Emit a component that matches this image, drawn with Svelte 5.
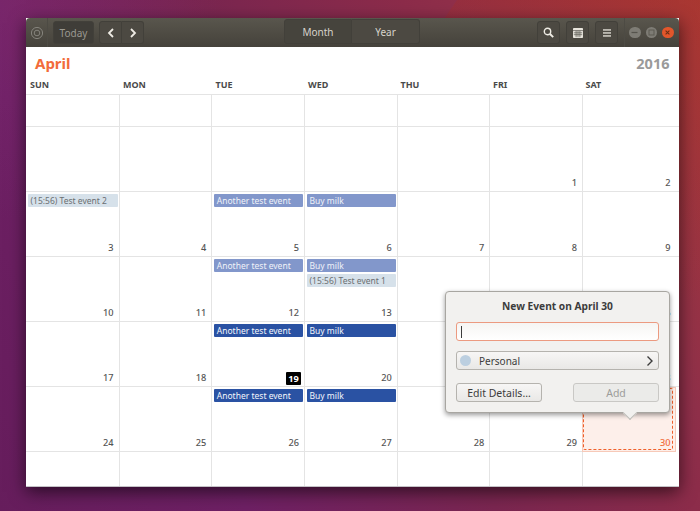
<script>
  const days = ["SUN", "MON", "TUE", "WED", "THU", "FRI", "SAT"];

  const another = { text: "Another test event", kind: "mid" };
  const milk = { text: "Buy milk", kind: "mid" };
  const anotherDark = { text: "Another test event", kind: "dark" };
  const milkDark = { text: "Buy milk", kind: "dark" };

  const events = {
    3: [{ text: "(15:56) Test event 2", kind: "light" }],
    5: [another],
    6: [milk],
    12: [another],
    13: [milk, { text: "(15:56) Test event 1", kind: "light" }],
    19: [anotherDark],
    20: [milkDark],
    26: [anotherDark],
    27: [milkDark]
  };

  // leading blanks for the first row, then 1..30, then blanks for the last
  const cells = [];
  for (let i = 0; i < 7; i++) cells.push({ day: null });
  for (let i = 0; i < 5; i++) cells.push({ day: null });
  for (let d = 1; d <= 30; d++) cells.push({ day: d, events: events[d] || [] });
  for (let i = 0; i < 7; i++) cells.push({ day: null });
</script>

<div class="desktop">
  <div class="band"></div>
  <div class="window">
    <header class="titlebar">
      <div class="group">
        <span class="app-icon">
          <svg width="14" height="14" viewBox="0 0 14 14" fill="none" stroke="#85837c">
            <circle cx="7" cy="7" r="5.6" />
            <circle cx="7" cy="7" r="2.8" />
          </svg>
        </span>
        <span class="sep"></span>
        <button class="btn today">Today</button>
        <div class="linked nav">
          <button class="btn">
            <svg width="10" height="12" viewBox="0 0 10 12" fill="none" stroke="#eeebe4" stroke-width="1.8">
              <path d="M7 2 3 6l4 4" />
            </svg>
          </button>
          <button class="btn">
            <svg width="10" height="12" viewBox="0 0 10 12" fill="none" stroke="#eeebe4" stroke-width="1.8">
              <path d="m3 2 4 4-4 4" />
            </svg>
          </button>
        </div>
      </div>

      <div class="linked switcher">
        <button class="btn active">Month</button>
        <button class="btn">Year</button>
      </div>

      <div class="group right">
        <button class="btn square">
          <svg width="11" height="11" viewBox="0 0 11 11" fill="none" stroke="#eeebe4" stroke-width="1.4">
            <circle cx="4.5" cy="4.5" r="3.2" />
            <path d="m7 7 3.2 3.2" stroke-width="1.9" />
          </svg>
        </button>
        <button class="btn square">
          <svg width="10" height="10" viewBox="0 0 10 10">
            <rect width="10" height="10" rx=".8" fill="#e8e5dd" />
            <path d="M0 2.6h10M.8 4.8h8.4M.8 6.7h8.4M3.1 2.6v6.6M5 2.6v6.6M6.9 2.6v6.6" stroke="#55534c" stroke-width=".7" fill="none" />
          </svg>
        </button>
        <button class="btn square">
          <svg width="8" height="8" viewBox="0 0 8 8" fill="#e8e5dd">
            <rect y=".3" width="8" height="1.3" />
            <rect y="3.3" width="8" height="1.3" />
            <rect y="6.3" width="8" height="1.3" />
          </svg>
        </button>
        <span class="sep wm-sep"></span>
        <div class="wm">
          <span class="wm-btn">
            <svg width="11" height="11" viewBox="0 0 11 11"><path d="M2.5 5.5h6" stroke="#55534c" stroke-width="1.2" /></svg>
          </span>
          <span class="wm-btn">
            <svg width="11" height="11" viewBox="0 0 11 11"><rect x="3" y="3" width="5" height="5" fill="none" stroke="#5c5a53" /></svg>
          </span>
          <span class="wm-btn close">
            <svg width="11" height="11" viewBox="0 0 11 11"><path d="m3.6 3.6 3.8 3.8m0-3.8L3.6 7.4" stroke="#6b2e14" stroke-width="1.1" /></svg>
          </span>
        </div>
      </div>
    </header>

    <main class="view">
      <div class="heading">
        <span class="month">April</span>
        <span class="year">2016</span>
      </div>
      <div class="weekdays">
        {#each days as d}
          <span>{d}</span>
        {/each}
      </div>
      <div class="grid">
        {#each cells as cell}
          <div class="cell" class:selected={cell.day === 30}>
            {#if cell.day}
              {#each cell.events as ev}
                <div class="event {ev.kind}">{ev.text}</div>
              {/each}
              <span class="num" class:today-num={cell.day === 19}>{cell.day}</span>
            {/if}
          </div>
        {/each}
      </div>

      <div class="popover">
        <h3>New Event on April 30</h3>
        <div class="entry"><span class="caret"></span></div>
        <div class="select">
          <span class="dot"></span>
          <span class="label">Personal</span>
          <svg width="8" height="12" viewBox="0 0 8 12" fill="none" stroke="#3c3c3c" stroke-width="1.4">
            <path d="m1.5 1.5 4.5 4.5-4.5 4.5" />
          </svg>
        </div>
        <div class="actions">
          <button class="pbtn">Edit Details...</button>
          <button class="pbtn disabled">Add</button>
        </div>
        <span class="arrow"></span>
      </div>
    </main>
  </div>
</div>

<style>
  :global(body) {
    margin: 0;
    overflow: hidden;
  }

  .desktop {
    position: relative;
    box-sizing: border-box;
    width: 700px;
    height: 511px;
    padding: 18px 21.5px 24px 26px;
    overflow: hidden;
    background:
      radial-gradient(circle at 0 0, rgba(140, 50, 130, 0.3), transparent 220px),
      linear-gradient(60deg, #661d5c 0%, #6e2064 25%, #7a2650 50%, #8c2c4a 70%, #90304a 76%, #a83a38 100%);
    font-family: "Noto Sans", sans-serif;
  }

  /* lighter red facet of the wallpaper, top right */
  .band {
    position: absolute;
    inset: 0;
    background: linear-gradient(rgba(175, 45, 25, 0.22), transparent 60%);
    clip-path: polygon(457px 0, 700px 0, 700px 511px, 110px 511px);
  }

  .window {
    position: relative;
    display: flex;
    flex-direction: column;
    height: 469px;
    background: #fff;
    box-shadow: 0 5px 16px rgba(0, 0, 0, 0.6);
  }

  .titlebar {
    position: relative;
    display: flex;
    align-items: center;
    justify-content: space-between;
    height: 29px;
    flex: none;
    padding: 0 5px 0 0;
    background: linear-gradient(#59564d, #45423b);
    border-radius: 4px 4px 0 0;
  }

  .group {
    display: flex;
    align-items: center;
    height: 100%;
  }

  .app-icon {
    display: flex;
    margin-left: 4px;
  }

  .sep {
    width: 1px;
    height: 100%;
    margin: 0 5px 0 3px;
    background: #4d4b44;
  }

  button {
    font-family: inherit;
  }

  .btn {
    display: flex;
    align-items: center;
    justify-content: center;
    height: 23px;
    padding: 0;
    border: 1px solid #42403a;
    border-radius: 3px;
    background: #4c4942;
    color: #d6d3cb;
    font-size: 10px;
  }

  .today {
    width: 41px;
    margin-right: 5px;
    background: #3f3d38;
    color: #9a9890;
  }

  .linked {
    display: flex;
  }

  .linked .btn:first-child {
    border-radius: 3px 0 0 3px;
  }

  .linked .btn:last-child {
    border-radius: 0 3px 3px 0;
    border-left: 0;
  }

  .nav .btn {
    width: 23px;
  }

  .nav .btn:last-child {
    width: 22px;
  }

  .switcher {
    position: absolute;
    left: 258px;
    top: 1px;
    height: 25px;
  }

  .switcher .btn {
    width: 68px;
    height: 25px;
  }

  .switcher .active {
    background: #46443d;
  }

  .right .square {
    width: 23px;
    margin-right: 6px;
  }

  .wm-sep {
    margin: 0 4px 0 0;
  }

  .wm {
    display: flex;
    gap: 5px;
  }

  .wm-btn {
    display: flex;
    align-items: center;
    justify-content: center;
    width: 11.5px;
    height: 11.5px;
    border-radius: 50%;
    background: #7e7c75;
  }

  .close {
    background: #e2562b;
  }

  .view {
    position: relative;
    display: flex;
    flex-direction: column;
    flex: 1;
    min-height: 0;
    border-bottom: 1px solid #c4c2c6;
  }

  .heading {
    display: flex;
    justify-content: space-between;
    align-items: center;
    height: 32px;
    padding: 0 9px 0 9px;
    font-size: 15px;
    font-weight: 700;
  }

  .month {
    color: #f26b3a;
  }

  .year {
    color: #9a9a9a;
    font-size: 14.5px;
  }

  .weekdays {
    display: grid;
    grid-template-columns: 93px repeat(5, 92.5px) 1fr;
    height: 15px;
    border-bottom: 1px solid #e4e4e4;
    font-size: 9px;
    font-weight: 700;
    color: #4a4a4a;
  }

  .weekdays span {
    padding-left: 4px;
    line-height: 12px;
  }

  .grid {
    display: grid;
    grid-template-columns: 93.6px repeat(5, 92.7px) 1fr;
    grid-template-rows: 32px repeat(5, 65px) 1fr;
    flex: 1;
    min-height: 0;
  }

  .cell {
    position: relative;
    box-sizing: border-box;
    padding: 2px 1px 0 2px;
    border-right: 1px solid #e4e4e4;
    border-bottom: 1px solid #e4e4e4;
    min-width: 0;
  }

  .cell:nth-child(7n) {
    border-right: 0;
  }

  .cell:nth-child(n + 43) {
    border-bottom: 0;
  }

  .cell:nth-child(7n) .num {
    right: 8px;
  }

  .cell.selected {
    background: #fdefea;
    margin: 0 3px 0 -1px;
    border: 1px solid #f7c9b8;
  }

  .cell.selected::after {
    content: "";
    position: absolute;
    inset: 0 2px 1px 0;
    border: 1px dashed #ef5f2a;
    border-radius: 2px;
  }

  .event {
    box-sizing: border-box;
    height: 13px;
    margin-bottom: 2px;
    padding-left: 2.5px;
    border-radius: 1px;
    font-size: 8.5px;
    line-height: 13px;
    white-space: nowrap;
    overflow: hidden;
  }

  .light {
    background: #d6e1ea;
    color: #6b6f72;
  }

  .mid {
    background: #8297cb;
    color: #f0f2f8;
  }

  .dark {
    background: #2a52a3;
    color: #f4f6fb;
  }

  .num {
    position: absolute;
    right: 5px;
    bottom: 2px;
    font-size: 9.2px;
    font-weight: 500;
    line-height: 13px;
    color: #555;
  }

  .today-num {
    right: 3px;
    bottom: 1.5px;
    width: 15px;
    background: #000;
    color: #fff;
    font-weight: 700;
    text-align: center;
    border-radius: 1px;
  }

  .cell.selected .num {
    color: #f26b3a;
    right: 4px;
  }

  .popover {
    position: absolute;
    left: 419px;
    top: 244px;
    box-sizing: border-box;
    display: flex;
    flex-direction: column;
    width: 225px;
    height: 122px;
    padding: 0 10px;
    background: #f2f1ef;
    border: 1px solid #a8a6a1;
    border-radius: 4px;
    box-shadow: 0 2px 5px rgba(0, 0, 0, 0.4);
    color: #3c3c3c;
  }

  .popover h3 {
    margin: 0;
    height: 30px;
    font-size: 10.2px;
    font-weight: 700;
    line-height: 29px;
    text-align: center;
  }

  .entry {
    display: flex;
    align-items: center;
    box-sizing: border-box;
    height: 19px;
    padding-left: 4px;
    background: linear-gradient(#f6f5f3, #fff);
    border: 1px solid #ec9a80;
    border-radius: 3px;
  }

  .caret {
    width: 1px;
    height: 12px;
    background: #3c3c3c;
  }

  .select {
    display: flex;
    align-items: center;
    box-sizing: border-box;
    height: 19px;
    margin-top: 10px;
    padding: 0 4px 0 3px;
    background: linear-gradient(#f7f6f5, #e9e8e6);
    border: 1px solid #b5b3ae;
    border-radius: 3px;
    font-size: 10px;
  }

  .dot {
    width: 11px;
    height: 11px;
    border-radius: 50%;
    background: #bccfe0;
  }

  .label {
    flex: 1;
    margin-left: 8px;
  }

  .actions {
    display: flex;
    justify-content: space-between;
    margin-top: 13px;
  }

  .pbtn {
    box-sizing: border-box;
    width: 86px;
    height: 19px;
    padding: 0;
    background: linear-gradient(#f7f6f5, #e9e8e6);
    border: 1px solid #b5b3ae;
    border-radius: 3px;
    color: #3c3c3c;
    font-size: 10.5px;
  }

  .disabled {
    background: #ebebe9;
    border-color: #c9c8c5;
    color: #9c9c9a;
  }

  .arrow {
    position: absolute;
    left: 179px;
    bottom: -6px;
    width: 10px;
    height: 10px;
    background: #f2f1ef;
    transform: rotate(45deg);
    border-right: 1px solid #bdbbb6;
    border-bottom: 1px solid #bdbbb6;
    box-sizing: border-box;
  }
</style>
